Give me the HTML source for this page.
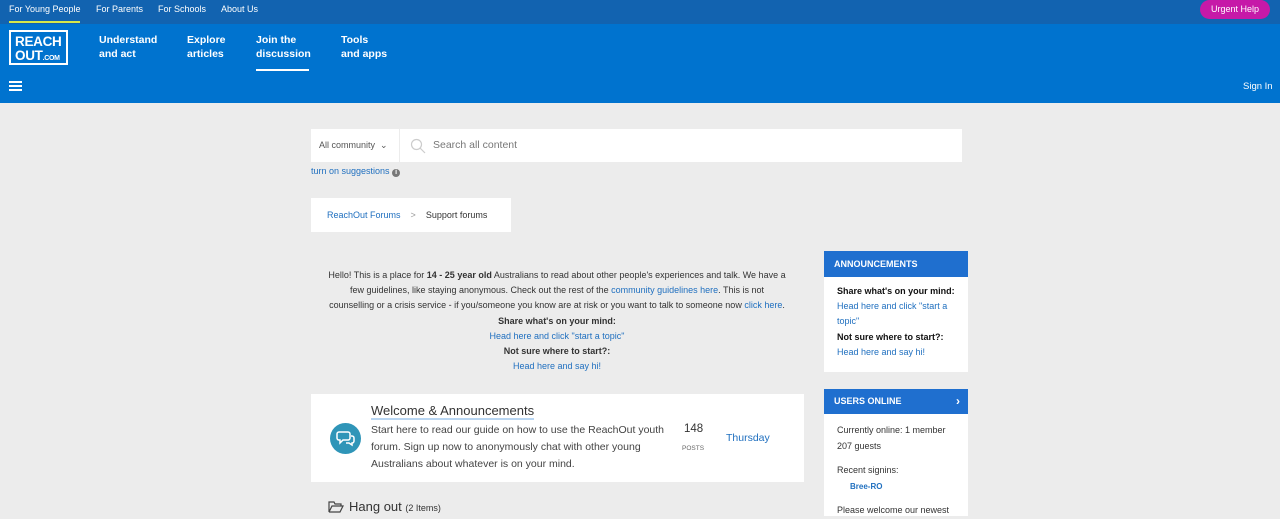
<!DOCTYPE html><html><head><style>
*{margin:0;padding:0;box-sizing:border-box}
body{width:1280px;height:516px;overflow:hidden;background:#ececec;font-family:"Liberation Sans",Arial,sans-serif;position:relative}
.a{position:absolute}
a{color:#1f6fbf;text-decoration:none}
</style></head><body>
<div class="a" style="left:0;top:0;width:1280px;height:24px;background:#1263b0"></div>
<div class="a" style="left:9px;top:4px;font-size:9px;color:#fff">For Young People</div>
<div class="a" style="left:9px;top:21px;width:71px;height:2px;background:#d6e84a"></div>
<div class="a" style="left:96px;top:4px;font-size:9px;color:#fff">For Parents</div>
<div class="a" style="left:158px;top:4px;font-size:9px;color:#fff">For Schools</div>
<div class="a" style="left:221px;top:4px;font-size:9px;color:#fff">About Us</div>
<div class="a" style="left:1200px;top:0;width:70px;height:19px;border-radius:10px;background:#c619a8;color:#fff;font-size:9px;text-align:center;line-height:19px">Urgent Help</div>
<div class="a" style="left:0;top:24px;width:1280px;height:79px;background:#0073cf"></div>
<div class="a" style="left:9px;top:30px;width:59px;height:35px;border:2px solid #fff;color:#fff;font-weight:bold;font-size:13.5px;line-height:14px;padding:3px 0 0 4px;letter-spacing:-0.3px">REACH<br>OUT<span style="font-size:7px">.COM</span></div>
<div class="a" style="left:99px;top:33px;color:#fff;font-weight:bold;font-size:10.5px;line-height:14px">Understand<br>and act</div>
<div class="a" style="left:187px;top:33px;color:#fff;font-weight:bold;font-size:10.5px;line-height:14px">Explore<br>articles</div>
<div class="a" style="left:256px;top:33px;color:#fff;font-weight:bold;font-size:10.5px;line-height:14px">Join the<br>discussion</div>
<div class="a" style="left:256px;top:69px;width:53px;height:2px;background:#fff"></div>
<div class="a" style="left:341px;top:33px;color:#fff;font-weight:bold;font-size:10.5px;line-height:14px">Tools<br>and apps</div>
<div class="a" style="left:9px;top:81px;width:13px;height:2px;background:#fff;box-shadow:0 4px 0 #fff,0 8px 0 #fff"></div>
<div class="a" style="left:1243px;top:81px;color:#fff;font-size:9.5px">Sign In</div>

<div class="a" style="left:311px;top:129px;width:88px;height:33px;background:#fff;font-size:9px;color:#555;line-height:33px;padding-left:8px">All community &nbsp;⌄</div>
<div class="a" style="left:400px;top:129px;width:562px;height:33px;background:#fff;font-size:10.5px;color:#777;line-height:33px;padding-left:33px">Search all content</div>
<svg class="a" style="left:410px;top:138px" width="16" height="16"><circle cx="6.5" cy="6.5" r="5" fill="none" stroke="#ccc" stroke-width="1.2"/><path d="M10 10l5 5" stroke="#ccc" stroke-width="1.2"/></svg>
<div class="a" style="left:311px;top:166px;font-size:9px;color:#1f6fbf">turn on suggestions <span style="display:inline-block;width:8px;height:8px;border-radius:50%;background:#777;color:#fff;font-size:7px;text-align:center;line-height:8px;font-weight:bold">i</span></div>
<div class="a" style="left:311px;top:198px;width:200px;height:34px;background:#fff;font-size:9px;line-height:34px;padding-left:16px;color:#333"><a>ReachOut Forums</a> &nbsp;&nbsp;&nbsp;<span style="color:#999">&gt;</span>&nbsp;&nbsp;&nbsp; Support forums</div>

<div class="a" style="left:327px;top:268px;width:460px;text-align:center;font-size:9px;line-height:15.2px;color:#333">Hello! This is a place for <b>14 - 25 year old</b> Australians to read about other people's experiences and talk. We have a few guidelines, like staying anonymous. Check out the rest of the <a>community guidelines here</a>. This is not counselling or a crisis service - if you/someone you know are at risk or you want to talk to someone now <a>click here</a>.<br><b>Share what's on your mind:</b><br><a>Head here and click "start a topic"</a><br><b>Not sure where to start?:</b><br><a>Head here and say hi!</a></div>

<div class="a" style="left:311px;top:394px;width:493px;height:88px;background:#fff"></div>
<div class="a" style="left:371px;top:403px;font-size:13px;color:#333;border-bottom:2px solid #b9d6f2;line-height:15px">Welcome &amp; Announcements</div>
<div class="a" style="left:330px;top:423px;width:31px;height:31px;border-radius:50%;background:#2f95b8"></div>
<svg class="a" style="left:336px;top:430px" width="20" height="17"><path d="M3 2h9a2 2 0 012 2v4a2 2 0 01-2 2H7l-3 3v-3H3a2 2 0 01-2-2V4a2 2 0 012-2z" fill="none" stroke="#fff" stroke-width="1.5"/><path d="M15 6h1a2 2 0 012 2v3a2 2 0 01-2 2v2l-3-2h-3" fill="none" stroke="#fff" stroke-width="1.5"/></svg>
<div class="a" style="left:371px;top:422px;width:300px;font-size:10.5px;line-height:17px;color:#444">Start here to read our guide on how to use the ReachOut youth forum. Sign up now to anonymously chat with other young Australians about whatever is on your mind.</div>
<div class="a" style="left:684px;top:423px;font-size:11.5px;color:#333">148</div>
<div class="a" style="left:682px;top:445px;font-size:6.5px;color:#666">POSTS</div>
<div class="a" style="left:726px;top:432px;font-size:10.5px;color:#1f6fbf">Thursday</div>
<svg class="a" style="left:328px;top:500px" width="16" height="13"><path d="M1 2h5l1 2h6v2H4L1 12V2zM1 12h11l3-6H4" fill="none" stroke="#444" stroke-width="1.2"/></svg>
<div class="a" style="left:349px;top:499px;font-size:13px;color:#333">Hang out <span style="font-size:9px">(2 Items)</span></div>

<div class="a" style="left:824px;top:251px;width:144px;height:121px;background:#fff"></div>
<div class="a" style="left:824px;top:251px;width:144px;height:26px;background:#1f6fcf;color:#fff;font-weight:bold;font-size:9px;line-height:26px;padding-left:10px">ANNOUNCEMENTS</div>
<div class="a" style="left:837px;top:284px;width:125px;font-size:9px;line-height:15.2px;color:#111"><b>Share what's on your mind:</b><br><a>Head here and click "start a topic"</a><br><b>Not sure where to start?:</b><br><a>Head here and say hi!</a></div>
<div class="a" style="left:824px;top:389px;width:144px;height:127px;background:#fff"></div>
<div class="a" style="left:824px;top:389px;width:144px;height:25px;background:#1f6fcf;color:#fff;font-weight:bold;font-size:9px;line-height:25px;padding-left:10px">USERS ONLINE<span style="position:absolute;right:8px;font-size:12px">›</span></div>
<div class="a" style="left:837px;top:423px;font-size:9px;line-height:15.5px;color:#333">Currently online: 1 member<br>207 guests<br><div style="height:9px"></div>Recent signins:<br><b style="color:#1f6fbf;font-size:8px;margin-left:13px">Bree-RO</b><br><div style="height:9px"></div>Please welcome our newest</div>
</body></html>
